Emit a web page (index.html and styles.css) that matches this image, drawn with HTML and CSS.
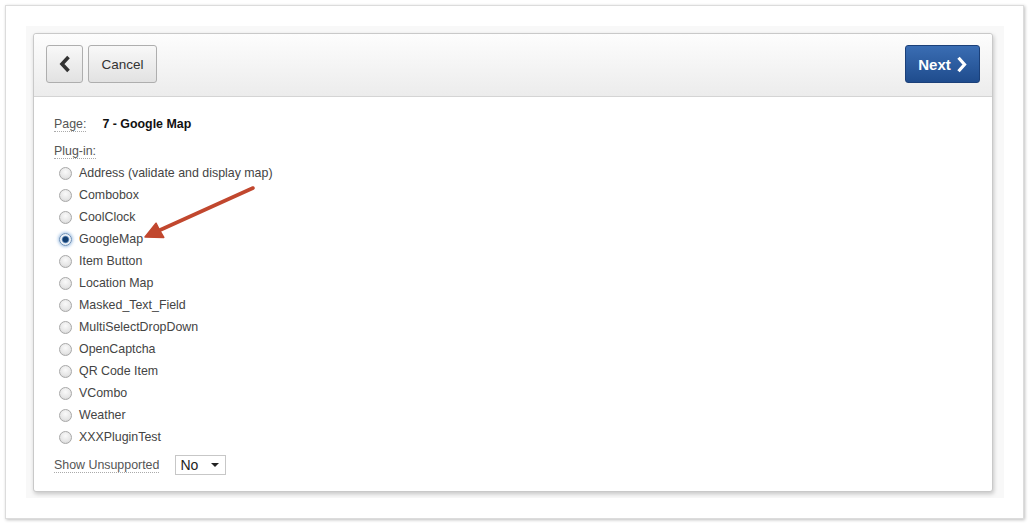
FILE: index.html
```html
<!DOCTYPE html>
<html lang="en">
<head>
  <meta charset="UTF-8" />
  <title>Create Page Item - Plug-in</title>
  <link rel="stylesheet" href="styles.css">
</head>
<body>
  <div class="frame">
    <div class="stage">
      <div class="wizard">
        <!-- button bar -->
        <div class="wizard-head">
          <div class="btn-group">
            <button class="btn btn-back" title="Previous">
              <svg width="12" height="18" viewBox="0 0 12 18"><path d="M9.5 2 L3 9 L9.5 16" fill="none" stroke="#333" stroke-width="3.6"/></svg>
            </button>
            <button class="btn btn-cancel">Cancel</button>
          </div>
          <button class="btn btn-next">Next
            <svg width="11" height="17" viewBox="0 0 11 17"><path d="M2.5 1.8 L8.5 8.5 L2.5 15.2" fill="none" stroke="#fff" stroke-width="3.2"/></svg>
          </button>
        </div>

        <!-- form -->
        <div class="wizard-body">
          <div class="row row-page">
            <span class="lbl">Page:</span>
            <span class="val">7 - Google Map</span>
          </div>
          <div class="row row-plugin"><span class="lbl">Plug-in:</span></div>
          <ul class="radios">
            <li><span class="radio"></span>Address (validate and display map)</li>
            <li><span class="radio"></span>Combobox</li>
            <li><span class="radio"></span>CoolClock</li>
            <li><span class="radio checked"></span>GoogleMap</li>
            <li><span class="radio"></span>Item Button</li>
            <li><span class="radio"></span>Location Map</li>
            <li><span class="radio"></span>Masked_Text_Field</li>
            <li><span class="radio"></span>MultiSelectDropDown</li>
            <li><span class="radio"></span>OpenCaptcha</li>
            <li><span class="radio"></span>QR Code Item</li>
            <li><span class="radio"></span>VCombo</li>
            <li><span class="radio"></span>Weather</li>
            <li><span class="radio"></span>XXXPluginTest</li>
          </ul>
          <div class="row row-show">
            <span class="lbl">Show Unsupported</span>
            <div class="select">No<span class="caret"></span></div>
          </div>
        </div>

        <!-- annotation arrow -->
        <svg class="arrow" width="124" height="64" viewBox="0 0 124 64">
          <path d="M113 8 L19 50.5" stroke="#c1472e" stroke-width="3.6" stroke-linecap="round" fill="none"/>
          <path d="M5 57 L16 43.2 L19.5 50.2 L23.8 57.4 Z" fill="#c1472e" stroke="#c1472e" stroke-width="1.5" stroke-linejoin="round"/>
        </svg>
      </div>
    </div>
  </div>
</body>
</html>
```
FILE: styles.css
```css
body { margin: 0; background: #fff; font-family: "Liberation Sans", Arial, sans-serif; font-size: 12.4px; color: #333; }

.frame { margin: 5px 6px 6px 5px; height: 514px; box-sizing: border-box; border: 1px solid #dcdcdc; box-shadow: 1px 1px 3px rgba(0,0,0,0.25); background: #fff; padding: 20px 19px 0 20px; }
.stage { height: 472px; box-sizing: border-box; background: #f8f8f8; padding: 7px 11px 6px 7px; }

.wizard { position: relative; height: 459px; box-sizing: border-box; background: #fff; border: 1px solid #c9c9c9; border-radius: 3px; box-shadow: 1px 2px 4px rgba(0,0,0,0.2); }
.wizard-head { height: 63px; box-sizing: border-box; display: flex; justify-content: space-between; align-items: flex-start; padding: 11px 12px 0 12px; background: linear-gradient(#fdfdfd, #ececec); border-bottom: 1px solid #d4d4d4; border-radius: 3px 3px 0 0; }
.btn-group { display: flex; gap: 5px; }

.btn { height: 38px; box-sizing: border-box; border-radius: 3px; font-family: inherit; cursor: pointer; display: flex; align-items: center; justify-content: center; padding: 0; }
.btn-back, .btn-cancel { background: linear-gradient(#f8f8f8, #e2e2e2); border: 1px solid #aeaeae; color: #333; }
.btn-back { width: 37px; }
.btn-cancel { width: 69px; font-size: 13.5px; }
.btn-next { width: 75px; gap: 5px; background: linear-gradient(#3a6db3, #1f4c8d); border: 1px solid #1b4079; color: #fff; font-size: 15px; font-weight: bold; padding-left: 0; }

.wizard-body { padding: 18px 20px 0 20px; }
.row { display: flex; align-items: center; }
.lbl { color: #555; border-bottom: 1px dotted #aaa; line-height: 14px; }
.row-page { height: 18px; }
.row-page .val { margin-left: 16px; font-weight: bold; color: #111; }
.row-plugin { height: 18px; margin-top: 9px; }

.radios { list-style: none; margin: 2px 0 0 0; padding: 0; }
.radios li { height: 22px; display: flex; align-items: center; color: #444; }
.radio { width: 11px; height: 11px; margin: 0 7px 0 5px; border-radius: 50%; border: 1px solid #a8a8a8; background: radial-gradient(circle at 50% 35%, #fafafa 0%, #e6e6e6 60%, #cfcfcf 100%); }
.radio.checked { border-color: #6c8fb6; background: radial-gradient(circle, #123f72 0 2.5px, #5f86b5 3.2px, #eef3f8 4.2px, #d7e0ea 100%); box-shadow: 0 0 3px 1px rgba(110,160,215,0.6); }

.row-show { height: 20px; margin-top: 7px; }
.select { margin-left: 16px; width: 51px; height: 20px; box-sizing: border-box; border: 1px solid #c7c7c7; font-size: 14px; color: #222; padding-left: 4px; display: flex; align-items: center; justify-content: space-between; padding-right: 6px; }
.caret { width: 0; height: 0; border-left: 4px solid transparent; border-right: 4px solid transparent; border-top: 4px solid #222; }

.arrow { position: absolute; left: 106px; top: 146px; }
```
